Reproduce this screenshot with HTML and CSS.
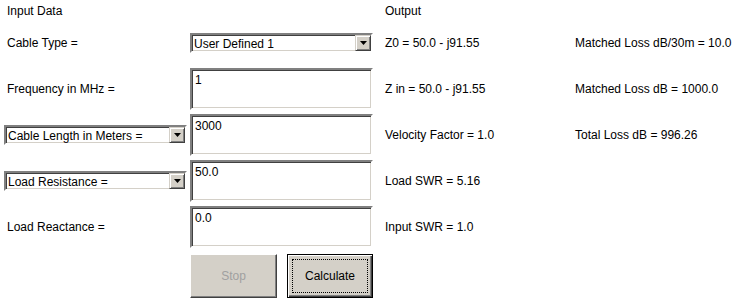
FILE: index.html
```html
<!DOCTYPE html>
<html lang="en">
<head>
  <meta charset="UTF-8">
  <title>Cable Loss Calculator</title>
  <link rel="stylesheet" href="styles.css">
</head>
<body>
  <div class="panel">
    <!-- Headings -->
    <div class="cell label heading">Input Data</div>
    <div class="cell"></div>
    <div class="cell out heading">Output</div>
    <div class="cell"></div>

    <!-- Row 1 -->
    <div class="cell label">Cable Type =</div>
    <div class="cell">
      <div class="combo">
        <span class="combo-value">User Defined 1</span>
        <span class="combo-arrow"><svg width="7" height="4" viewBox="0 0 7 4"><path d="M0 0h7L3.5 4z" fill="#000"/></svg></span>
      </div>
    </div>
    <div class="cell out">Z0 = 50.0 - j91.55</div>
    <div class="cell out">Matched Loss dB/30m = 10.0</div>

    <!-- Row 2 -->
    <div class="cell label">Frequency in MHz =</div>
    <div class="cell"><textarea class="field">1</textarea></div>
    <div class="cell out">Z in = 50.0 - j91.55</div>
    <div class="cell out">Matched Loss dB = 1000.0</div>

    <!-- Row 3 -->
    <div class="cell">
      <div class="combo">
        <span class="combo-value">Cable Length in Meters =</span>
        <span class="combo-arrow"><svg width="7" height="4" viewBox="0 0 7 4"><path d="M0 0h7L3.5 4z" fill="#000"/></svg></span>
      </div>
    </div>
    <div class="cell"><textarea class="field">3000</textarea></div>
    <div class="cell out">Velocity Factor = 1.0</div>
    <div class="cell out">Total Loss dB = 996.26</div>

    <!-- Row 4 -->
    <div class="cell">
      <div class="combo">
        <span class="combo-value">Load Resistance =</span>
        <span class="combo-arrow"><svg width="7" height="4" viewBox="0 0 7 4"><path d="M0 0h7L3.5 4z" fill="#000"/></svg></span>
      </div>
    </div>
    <div class="cell"><textarea class="field">50.0</textarea></div>
    <div class="cell out">Load SWR = 5.16</div>
    <div class="cell"></div>

    <!-- Row 5 -->
    <div class="cell label">Load Reactance =</div>
    <div class="cell"><textarea class="field">0.0</textarea></div>
    <div class="cell out">Input SWR = 1.0</div>
    <div class="cell"></div>

    <!-- Buttons -->
    <div class="cell"></div>
    <div class="cell buttons">
      <button class="btn btn--disabled" disabled>Stop</button>
      <button class="btn btn--default"><span class="btn-focus">Calculate</span></button>
    </div>
    <div class="cell"></div>
    <div class="cell"></div>
  </div>
</body>
</html>
```

FILE: styles.css
```css
* {
  box-sizing: border-box;
}

body {
  margin: 0;
  background: #ffffff;
  color: #000000;
  font: 12px/14px 'Liberation Sans', Arial, sans-serif;
}

.panel {
  display: grid;
  grid-template-columns: 186px 196px 190px 1fr;
  grid-template-rows: 20px repeat(5, 46px) 48px;
  padding-left: 4px;
}

.cell {
  display: flex;
  align-items: center;
}

.label {
  padding-left: 3px;
}

.out {
  margin-left: -1px;
}

.heading {
  align-self: start;
  margin-top: 4px;
}

/* Combo box */
.combo {
  display: flex;
  align-items: stretch;
  width: 183px;
  height: 20px;
  background: #ffffff;
  border-style: solid;
  border-width: 2px;
  border-color: #808080 #ffffff #ffffff #808080;
  box-shadow: inset 1px 1px 0 #404040, inset -1px -1px 0 #d4d0c8;
}

.combo-value {
  flex: 1;
  padding: 2px 0 0 2px;
  white-space: nowrap;
  overflow: hidden;
}

.combo-arrow {
  width: 16px;
  display: flex;
  align-items: center;
  justify-content: center;
  background: #d4d0c8;
  border-style: solid;
  border-width: 1px;
  border-color: #d4d0c8 #404040 #404040 #d4d0c8;
  box-shadow: inset 1px 1px 0 #ffffff, inset -1px -1px 0 #808080;
}

/* Text fields */
.field {
  width: 183px;
  height: 42px;
  margin: 0;
  padding: 3px 3px;
  resize: none;
  overflow: hidden;
  font: 12px/14px 'Liberation Sans', Arial, sans-serif;
  color: #000000;
  background: #ffffff;
  border-style: solid;
  border-width: 2px;
  border-color: #808080 #ffffff #ffffff #808080;
  box-shadow: inset 1px 1px 0 #404040, inset -1px -1px 0 #d4d0c8;
  outline: none;
}

/* Buttons */
.buttons {
  align-items: flex-end;
  gap: 10px;
}

.btn {
  height: 44px;
  margin: 0;
  padding: 0;
  font: 12px/14px 'Liberation Sans', Arial, sans-serif;
  color: #000000;
  background: #d4d0c8;
  border-style: solid;
  border-width: 1px;
  border-color: #ffffff #404040 #404040 #ffffff;
  box-shadow: inset -1px -1px 0 #808080;
}

.btn--disabled {
  width: 87px;
  color: #a0a0a0;
}

.btn--default {
  width: 86px;
  border-color: #000000;
  box-shadow: inset 1px 1px 0 #ffffff, inset -1px -1px 0 #404040, inset -2px -2px 0 #808080;
  padding: 4px;
}

.btn-focus {
  display: flex;
  align-items: center;
  justify-content: center;
  height: 100%;
  border: 1px dotted #000000;
}
```
